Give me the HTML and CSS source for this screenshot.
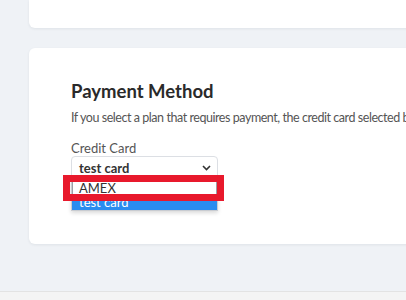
FILE: index.html
```html
<!DOCTYPE html>
<html lang="en">

<head>
    <meta charset="UTF-8">
    <meta name="viewport" content="width=device-width, initial-scale=1.0">
    <title>Payment Method</title>
    <link rel="stylesheet" href="styles.css">
</head>

<body>
    <div class="page">
        <div class="card card-top"></div>
        <div class="card card-payment">
            <h2>Payment Method</h2>
            <p class="lead">If you select a plan that requires payment, the credit card selected below will be charged.</p>
            <div class="field">
                <label class="label">Credit Card</label>
                <div class="select">
                    <span>test card</span>
                    <svg class="chevron" width="9" height="6" viewBox="0 0 9 6">
                        <path d="M1 1 L4.5 4.5 L8 1" fill="none" stroke="#333" stroke-width="1.6"/>
                    </svg>
                </div>
                <p class="hint">Cards are set up in Billing</p>
                <ul class="options">
                    <li class="option">AMEX</li>
                    <li class="option selected">test card</li>
                </ul>
                <div class="marker"></div>
            </div>
        </div>
        <div class="footer"></div>
    </div>
</body>

</html>
```

FILE: styles.css
```css
html,
body {
    margin: 0;
    padding: 0;
    overflow: hidden;
}

body {
    font-family: 'Lato', 'Open Sans', sans-serif;
    background: #eff2f6;
    width: 406px;
    height: 300px;
}

.page {
    display: flex;
    flex-direction: column;
    height: 300px;
}

.card {
    margin-left: 29px;
    width: 520px;
    background: #fff;
    border-radius: 6px;
    box-shadow: 0 1px 3px rgba(40, 50, 70, 0.08);
    box-sizing: border-box;
}

.card-top {
    height: 28px;
    border-top-left-radius: 0;
    border-top-right-radius: 0;
}

.card-payment {
    margin-top: 20px;
    height: 196px;
    padding: 31px 0 0 42px;
}

h2 {
    margin: 0;
    font-size: 18.5px;
    font-weight: 700;
    color: #2a2a2a;
    line-height: 24px;
}

.lead {
    margin: 6px 0 0;
    font-size: 12.5px;
    color: #555;
    line-height: 18px;
    white-space: nowrap;
    letter-spacing: -0.45px;
}

.field {
    position: relative;
    margin-top: 13px;
    width: 147px;
}

.label {
    display: block;
    font-size: 13px;
    color: #555;
    line-height: 16px;
}

.select {
    height: 22px;
    border: 1px solid #dcdfe4;
    border-radius: 4px;
    display: flex;
    align-items: center;
    justify-content: space-between;
    padding: 0 6px 0 7px;
    font-size: 13px;
    font-weight: 700;
    color: #333;
}

.hint {
    margin: 17px 0 0;
    font-size: 12px;
    line-height: 14px;
    color: #777;
    white-space: nowrap;
}

.options {
    position: absolute;
    left: 0;
    top: 40px;
    width: 147px;
    margin: 0;
    padding: 0;
    list-style: none;
    background: #fff;
    border: 1px solid #c9ccd1;
    box-sizing: border-box;
    box-shadow: 0 2px 4px rgba(0, 0, 0, 0.15);
    font-size: 13px;
}

.option {
    height: 15px;
    line-height: 15px;
    padding-left: 7px;
    color: #333;
}

.option:first-child {
    outline: 1px solid #9aa0a6;
    outline-offset: -1px;
}

.option.selected {
    height: 14px;
    line-height: 13px;
    background: #2a8cf0;
    color: #fff;
}

.marker {
    position: absolute;
    left: -8px;
    top: 35px;
    width: 161px;
    height: 26px;
    border: 7px solid #e8192c;
    box-sizing: border-box;
}

.footer {
    margin-top: auto;
    height: 8px;
    background: #f4f4f4;
    border-top: 1px solid #e3e3e3;
}
```
